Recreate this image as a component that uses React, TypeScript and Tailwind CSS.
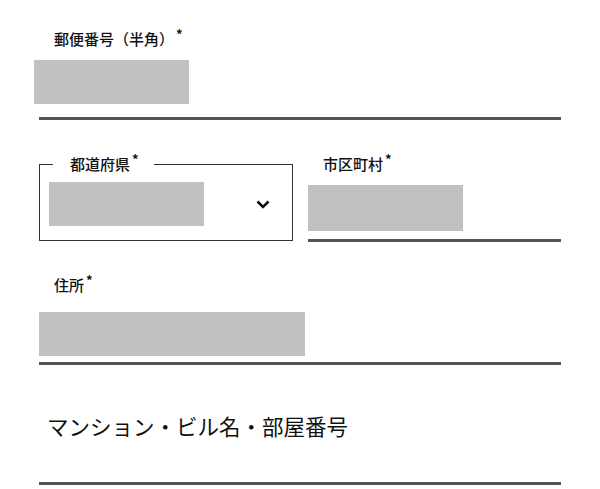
import React from 'react'

function Req() {
  return <span className="inline-block align-top text-[13px] font-bold leading-none ml-[2px] -mt-[2px]">*</span>
}

function Gray({ className }: { className: string }) {
  return <div className={`bg-[#c1c1c1] ${className}`} />
}

function Rule({ className = '' }: { className?: string }) {
  return <div className={`h-[3px] bg-[#555555] ${className}`} />
}

export default function App() {
  return (
    <div
      className="w-[600px] h-[489px] bg-white text-[#111111] font-medium pl-[39px] pr-[39px] overflow-hidden"
      style={{ fontFamily: '"Noto Sans CJK JP", "Noto Sans", sans-serif' }}
    >
      {/* 郵便番号 */}
      <div className="pt-[29px]">
        <label className="block pl-[15px] text-[15px] leading-[20px]">
          郵便番号（半角）<Req />
        </label>
        <Gray className="mt-[11px] -ml-[5px] w-[155px] h-[44px]" />
        <Rule className="mt-[13px]" />
      </div>

      {/* 都道府県 / 市区町村 */}
      <div className="mt-[34px] flex items-start">
        <fieldset className="w-[254px] border border-[#333333] pb-[14px] m-0 p-0">
          <legend className="ml-[13px] pl-[17px] pr-[15px] text-[15px] leading-[20px]">
            都道府県<Req />
          </legend>
          <div className="flex items-center mt-[8px]">
            <Gray className="ml-[9px] w-[155px] h-[44px]" />
            <svg className="ml-auto mr-[22px]" width="14" height="9" viewBox="0 0 14 9" fill="none">
              <polyline points="1.5,1.5 7,7 12.5,1.5" stroke="#111" strokeWidth="2.6" />
            </svg>
          </div>
        </fieldset>
        <div className="ml-[15px] flex-1">
          <label className="block pl-[15px] text-[15px] leading-[20px]">
            市区町村<Req />
          </label>
          <Gray className="mt-[11px] w-[155px] h-[46px]" />
          <Rule className="mt-[8px]" />
        </div>
      </div>

      {/* 住所 */}
      <div className="mt-[33px]">
        <label className="block pl-[15px] text-[15px] leading-[20px]">
          住所<Req />
        </label>
        <Gray className="mt-[17px] w-[266px] h-[44px]" />
        <Rule className="mt-[6px]" />
      </div>

      {/* マンション・ビル名・部屋番号 */}
      <div className="mt-[46px]">
        <p className="pl-[8px] text-[21.5px] font-normal leading-[30px]">マンション・ビル名・部屋番号</p>
        <Rule className="mt-[41px]" />
      </div>
    </div>
  )
}
